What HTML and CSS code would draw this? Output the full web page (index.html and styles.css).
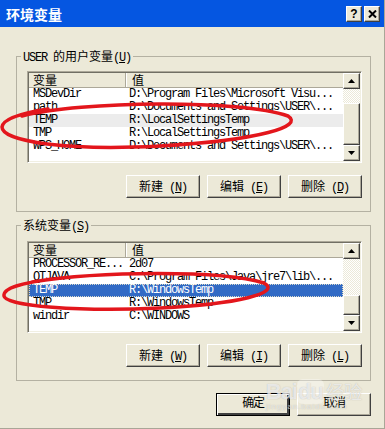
FILE: index.html
```html
<!DOCTYPE html>
<html lang="zh-CN">
<head>
    <meta charset="UTF-8">
    <title>环境变量</title>
    <link rel="stylesheet" href="styles.css">
</head>
<body>
    <div class="window">
        <div class="titlebar">
            <span class="title">环境变量</span>
            <span class="captionButtons">
                <span class="capBtn">?</span>
                <span class="capBtn">
                    <svg width="9" height="8" viewBox="0 0 9 8"><path d="M1 0.5 L8 7.5 M8 0.5 L1 7.5" stroke="#000" stroke-width="2"/></svg>
                </span>
            </span>
        </div>

        <div class="content">
            <fieldset class="group">
                <legend>USER <span class="zh">的用户变量</span>(<u>U</u>)</legend>
                <div class="listview">
                    <div class="listMain">
                        <div class="listHead"><span class="colName zh">变量</span><span class="colValue zh">值</span></div>
                        <div class="row"><span class="colName">MSDevDir</span><span class="colValue">D:\Program Files\Microsoft Visu...</span></div>
                        <div class="row"><span class="colName">path</span><span class="colValue">D:\Documents and Settings\USER\...</span></div>
                        <div class="row inactive"><span class="colName">TEMP</span><span class="colValue">R:\LocalSettingsTemp</span></div>
                        <div class="row"><span class="colName">TMP</span><span class="colValue">R:\LocalSettingsTemp</span></div>
                        <div class="row"><span class="colName">WPS_HOME</span><span class="colValue">D:\Documents and Settings\USER\...</span></div>
                    </div>
                    <div class="scrollbar">
                        <div class="sbBtn"><svg width="7" height="4" viewBox="0 0 7 4"><path d="M3.5 0 L7 4 L0 4 Z"/></svg></div>
                        <div class="sbTrack"><div class="sbThumb" style="height: 42px"></div></div>
                        <div class="sbBtn"><svg width="7" height="4" viewBox="0 0 7 4"><path d="M0 0 L7 0 L3.5 4 Z"/></svg></div>
                    </div>
                </div>
                <div class="buttonRow">
                    <button class="btn"><span class="zh">新建</span> (<u>N</u>)</button>
                    <button class="btn"><span class="zh">编辑</span> (<u>E</u>)</button>
                    <button class="btn"><span class="zh">删除</span> (<u>D</u>)</button>
                </div>
            </fieldset>

            <fieldset class="group second">
                <legend><span class="zh">系统变量</span>(<u>S</u>)</legend>
                <div class="listview">
                    <div class="listMain">
                        <div class="listHead"><span class="colName zh">变量</span><span class="colValue zh">值</span></div>
                        <div class="row"><span class="colName">PROCESSOR_RE...</span><span class="colValue">2d07</span></div>
                        <div class="row"><span class="colName">QTJAVA</span><span class="colValue">C:\Program Files\Java\jre7\lib\...</span></div>
                        <div class="row selected"><span class="colName">TEMP</span><span class="colValue">R:\WindowsTemp</span></div>
                        <div class="row"><span class="colName">TMP</span><span class="colValue">R:\WindowsTemp</span></div>
                        <div class="row"><span class="colName">windir</span><span class="colValue">C:\WINDOWS</span></div>
                    </div>
                    <div class="scrollbar">
                        <div class="sbBtn"><svg width="7" height="4" viewBox="0 0 7 4"><path d="M3.5 0 L7 4 L0 4 Z"/></svg></div>
                        <div class="sbTrack"><div class="sbThumb" style="height: 20px"></div></div>
                        <div class="sbBtn"><svg width="7" height="4" viewBox="0 0 7 4"><path d="M0 0 L7 0 L3.5 4 Z"/></svg></div>
                    </div>
                </div>
                <div class="buttonRow">
                    <button class="btn"><span class="zh">新建</span> (<u>W</u>)</button>
                    <button class="btn"><span class="zh">编辑</span> (<u>I</u>)</button>
                    <button class="btn"><span class="zh">删除</span> (<u>L</u>)</button>
                </div>
            </fieldset>

            <div class="dialogButtons">
                <button class="btn default zh">确定</button>
                <button class="btn zh">取消</button>
            </div>
        </div>

        <!-- 红圈标注 -->
        <svg class="marks" width="385" height="429" viewBox="0 0 385 429">
            <path d="M22 116 C80 101 240 99 288 116 C304 126 262 140 160 146 C70 151 2 142 2 127 C3 119 22 113 48 109" />
            <path d="M32 282 C100 271 222 270 264 283 C282 293 238 304 160 308 C80 312 5 306 4 296 C3 288 22 283 52 279" />
        </svg>

        <div class="watermark">
            <span class="wmLogo">Bai<span class="wmDu">du</span></span><span class="wmText">经验</span>
            <div class="wmUrl">jingyan.baidu.com</div>
        </div>
    </div>
</body>
</html>
```

FILE: styles.css
```css
body {
    margin: 0;
    background: #ECE9D8;
    font-family: "Liberation Mono", "Noto Sans CJK SC", monospace;
    font-size: 12px;
    color: #000;
}

.zh {
    font-family: "Noto Sans CJK SC", sans-serif;
    font-size: 12px;
    letter-spacing: 0;
}

.window {
    position: relative;
    width: 385px;
    height: 429px;
    overflow: hidden;
    box-sizing: border-box;
    border-right: 1px solid #a9a697;
    border-bottom: 1px solid #a9a697;
}

/* 标题栏 */
.titlebar {
    height: 27px;
    background: #0556E1;
    display: flex;
    align-items: center;
    justify-content: space-between;
    padding: 0 4px 0 6px;
}

.title {
    font-family: "Noto Sans CJK SC", sans-serif;
    font-size: 14px;
    font-weight: bold;
    color: #fff;
    line-height: 16px;
}

.captionButtons {
    display: flex;
    gap: 2px;
}

.capBtn {
    width: 16px;
    height: 16px;
    box-sizing: border-box;
    background: #ECE9D8;
    border: 1px solid;
    border-color: #fff #404040 #404040 #fff;
    box-shadow: inset -1px -1px #aca899;
    display: flex;
    align-items: center;
    justify-content: center;
    font-family: "Liberation Sans", sans-serif;
    font-weight: bold;
    font-size: 12px;
    line-height: 12px;
}

/* 主体 */
.content {
    padding: 22px 13px 0 16px;
}

.group {
    margin: 0;
    width: 355px;
    box-sizing: border-box;
    padding: 0 8px 13px 10px;
    border: 1px solid #b4b1a2;
    min-inline-size: 0;
}

.group.second {
    margin-top: 6px;
}

.group legend {
    margin-left: -6px;
    padding: 0 2px;
    line-height: 14px;
    height: 14px;
    font-size: 12px;
    letter-spacing: -1.2px;
}

.group legend .zh {
    font-size: 12px;
}

.listview {
    margin-top: 8px;
    height: 92px;
    box-sizing: border-box;
    background: #fff;
    border: 1px solid;
    border-color: #aca899 #fff #fff #aca899;
    box-shadow: inset 1px 1px #716f64, inset -1px -1px #f1efe2;
    padding: 1px;
    display: flex;
}

.group.second .listview {
    margin-top: 9px;
}

.listMain {
    flex: 1;
    min-width: 0;
}

.listHead {
    height: 15px;
    box-sizing: border-box;
    background: #ECE9D8;
    border-bottom: 1px solid #aca899;
    display: flex;
    align-items: stretch;
}

.listHead .colName {
    line-height: 14px;
    border-right: 1px solid #aca899;
    box-shadow: 1px 0 #fff;
}

.listHead .colValue {
    padding-left: 6px;
    line-height: 14px;
}

.row {
    height: 13px;
    line-height: 13px;
    display: flex;
    font-size: 12px;
    letter-spacing: -1.2px;
    white-space: nowrap;
}

.colName {
    width: 97px;
    flex: none;
    box-sizing: border-box;
    padding-left: 4px;
}

.colValue {
    padding-left: 3px;
}

.row.inactive {
    background: #ececec;
}

.row.selected {
    background: #316AC5;
    color: #fff;
    outline: 1px dotted #d8d8c8;
    outline-offset: -1px;
}

/* 滚动条 */
.scrollbar {
    width: 17px;
    flex: none;
    display: flex;
    flex-direction: column;
}

.sbBtn,
.sbThumb {
    box-sizing: border-box;
    background: #ECE9D8;
    border: 1px solid;
    border-color: #fff #404040 #404040 #fff;
    box-shadow: inset -1px -1px #aca899;
}

.sbBtn {
    height: 16px;
    display: flex;
    align-items: center;
    justify-content: center;
}

.sbTrack {
    flex: 1;
    display: flex;
    flex-direction: column;
    justify-content: flex-end;
    background: repeating-conic-gradient(#fff 0 25%, #ECE9D8 0 50%) 0 0 / 2px 2px;
}

/* 按钮 */
.buttonRow {
    margin-top: 12px;
    display: flex;
    justify-content: flex-end;
    gap: 7px;
}

.group.second .buttonRow {
    margin-top: 11px;
}

.btn {
    width: 74px;
    height: 23px;
    margin: 0;
    padding: 0;
    box-sizing: border-box;
    background: #ECE9D8;
    border: 1px solid;
    border-color: #fff #404040 #404040 #fff;
    box-shadow: inset -1px -1px #aca899;
    font-family: "Liberation Mono", "Noto Sans CJK SC", monospace;
    font-size: 12px;
    letter-spacing: -1.2px;
    color: #000;
    line-height: 19px;
}

.btn.default {
    border: 1px solid #000;
    box-shadow: inset 1px 1px #fff, inset -2px -2px #404040;
}

.dialogButtons {
    margin-top: 12px;
    display: flex;
    justify-content: flex-end;
    gap: 7px;
}

/* 标注 */
.marks {
    position: absolute;
    left: 0;
    top: 0;
    pointer-events: none;
}

.marks path {
    fill: none;
    stroke: #e3161c;
    stroke-width: 3.5;
    stroke-linecap: round;
}

.watermark {
    position: absolute;
    left: 266px;
    top: 378px;
    color: rgba(255, 255, 255, 0.7);
    text-shadow: 0 0 1px rgba(120, 120, 120, 0.5);
    pointer-events: none;
}

.wmLogo {
    font-family: "Liberation Sans", sans-serif;
    font-weight: bold;
    font-size: 22px;
    letter-spacing: -1px;
}

.wmDu {
    background: rgba(255, 255, 255, 0.35);
    border-radius: 6px;
    padding: 0 1px;
}

.wmText {
    font-family: "Noto Sans CJK SC", sans-serif;
    font-size: 18px;
    margin-left: 2px;
}

.wmUrl {
    font-family: "Liberation Sans", sans-serif;
    font-size: 8px;
    letter-spacing: 1px;
    margin-top: -3px;
    color: rgba(255, 255, 255, 0.6);
}
```
